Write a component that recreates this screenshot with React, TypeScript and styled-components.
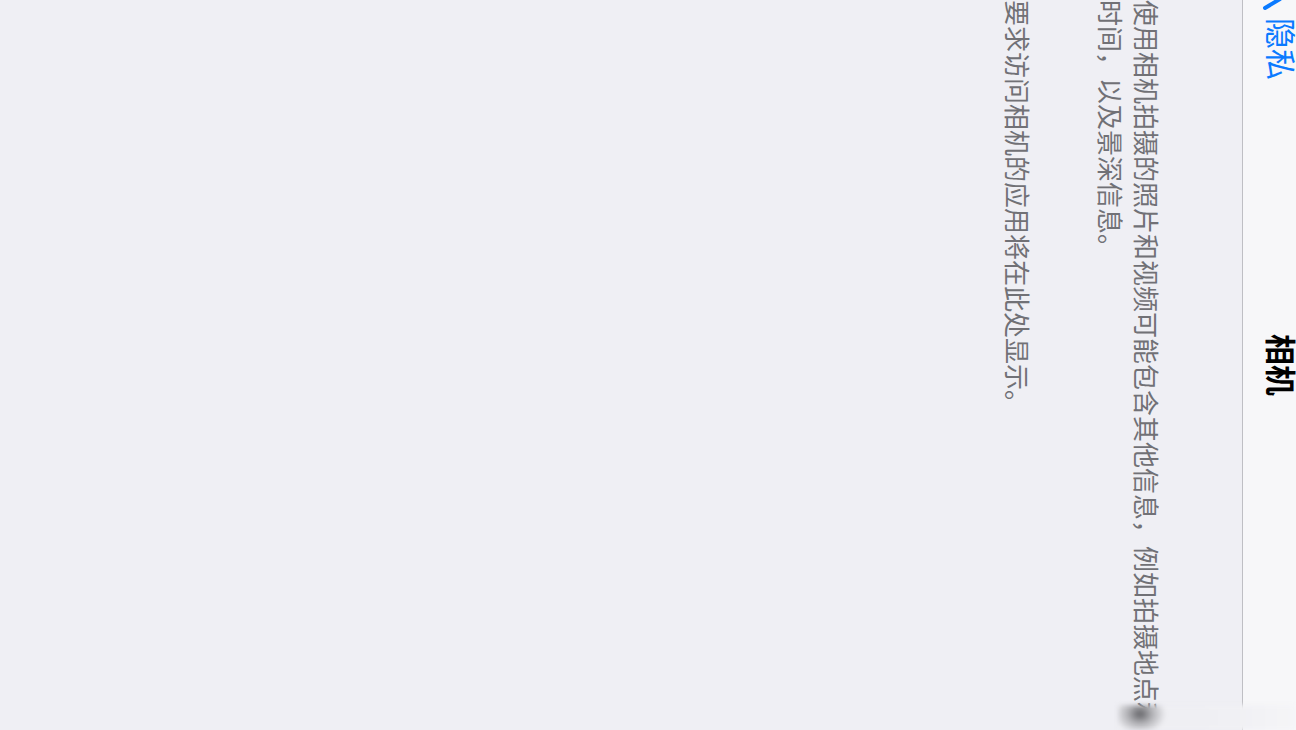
import React from "react";
import styled, { createGlobalStyle } from "styled-components";

const GlobalStyle = createGlobalStyle`
  html, body {
    margin: 0;
    padding: 0;
    background: #efeff4;
  }
`;

// The whole screen is shown turned a quarter turn: text runs top to bottom,
// lines stack from right to left.
const Screen = styled.div`
  position: relative;
  width: 1296px;
  height: 730px;
  overflow: hidden;
  background: #efeff4;
  writing-mode: vertical-rl;
  text-orientation: sideways;
  font-family: "Noto Sans CJK SC", "Noto Sans", sans-serif;
`;

const NavBar = styled.header`
  box-sizing: border-box;
  inline-size: 730px;
  block-size: 54px;
  background: #f7f7f9;
  border-block-end: 1px solid #bfbfc4;
  display: grid;
  grid-template-columns: 1fr auto 1fr;
  align-items: start;
`;

const BackButton = styled.a`
  display: flex;
  align-items: flex-start;
  color: #0a7aff;
  font-size: 31px;
  line-height: 28px;
  text-decoration: none;
  justify-self: start;

  svg {
    flex: none;
    margin-inline-start: -12px;
    margin-inline-end: 6px;
  }
`;

const Title = styled.h1`
  margin: 0;
  font-size: 31px;
  line-height: 28px;
  font-weight: 700;
  color: #000;
`;

const Content = styled.main`
  inline-size: 730px;
  padding-block-start: 77px;
`;

const Footnote = styled.p<{ $gap?: number }>`
  margin: 0;
  margin-block-start: ${(p) => p.$gap ?? 0}px;
  font-size: 26px;
  line-height: 36px;
  color: #717176;
  font-weight: 400;
`;

const HomeBar = styled.div`
  position: absolute;
  right: 0;
  bottom: 0;
  width: 178px;
  height: 25px;
  background:
    radial-gradient(ellipse 26px 20px at 22px 9px, rgba(92, 92, 96, 0.95), rgba(125, 125, 129, 0.5) 50%, rgba(239, 239, 244, 0) 100%),
    linear-gradient(to right, #eeeef2 0%, #f0f0f4 65%, #f5f5f7 100%);
  filter: blur(2px);
`;

const Chevron = () => (
  <svg width="34" height="24" viewBox="0 0 34 24" aria-hidden="true">
    <path
      d="M3 20 L18 11"
      stroke="#0a7aff"
      strokeWidth="4"
      strokeLinecap="round"
      fill="none"
    />
  </svg>
);

export default function App() {
  return (
    <>
      <GlobalStyle />
      <Screen>
        <NavBar>
          <BackButton href="#">
            <Chevron />
            隐私
          </BackButton>
          <Title>相机</Title>
        </NavBar>
        <Content>
          <Footnote>
            使用相机拍摄的照片和视频可能包含其他信息，例如拍摄地点和时间，以及景深信息。
          </Footnote>
          <Footnote $gap={57}>要求访问相机的应用将在此处显示。</Footnote>
        </Content>
        <HomeBar />
      </Screen>
    </>
  );
}
